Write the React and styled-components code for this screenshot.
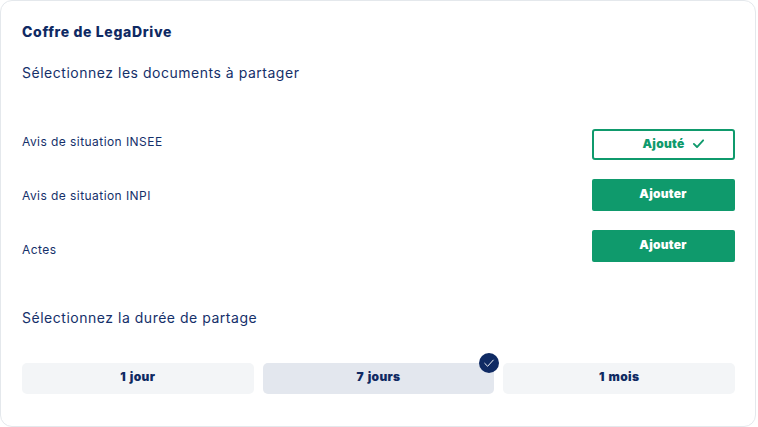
import styled, { createGlobalStyle } from "styled-components";

const GlobalStyle = createGlobalStyle`
  html, body {
    margin: 0;
    padding: 0;
    background: #fff;
    font-family: Inter, "Liberation Sans", sans-serif;
    color: #0f2a63;
  }
`;

const docs = [
  { name: "Avis de situation INSEE", added: true, shift: -2 },
  { name: "Avis de situation INPI", added: false, shift: 1 },
  { name: "Actes", added: false, shift: 4 },
];

const durations = [
  { label: "1 jour" },
  { label: "7 jours", selected: true },
  { label: "1 mois" },
];

const Check = ({ size, color, weight }) => (
  <svg width={size} height={size} viewBox="0 0 14 14" fill="none">
    <path
      d="M2 7.4 5.4 10.8 12 3.6"
      stroke={color}
      strokeWidth={weight}
      strokeLinecap="round"
      strokeLinejoin="round"
    />
  </svg>
);

export default function App() {
  return (
    <>
      <GlobalStyle />
      <Card>
        <Title>Coffre de LegaDrive</Title>
        <Subtitle>Sélectionnez les documents à partager</Subtitle>
        <DocList>
          {docs.map((doc) => (
            <DocRow key={doc.name}>
              <DocName $shift={doc.shift}>{doc.name}</DocName>
              {doc.added ? (
                <AddedBtn>
                  Ajouté
                  <Check size={13} color="#0f9a6c" weight={2} />
                </AddedBtn>
              ) : (
                <AddBtn>Ajouter</AddBtn>
              )}
            </DocRow>
          ))}
        </DocList>
        <DurationTitle>Sélectionnez la durée de partage</DurationTitle>
        <Durations>
          {durations.map((d) => (
            <DurationBtn key={d.label} $selected={d.selected}>
              {d.label}
              {d.selected && (
                <Badge>
                  <Check size={12} color="#fff" weight={1.1} />
                </Badge>
              )}
            </DurationBtn>
          ))}
        </Durations>
      </Card>
    </>
  );
}

const Card = styled.div`
  box-sizing: border-box;
  width: 756px;
  height: 427px;
  padding: 22px 20px 0 21px;
  background: #fff;
  border: 1px solid #e4e8ec;
  border-radius: 12px;
`;

const Title = styled.div`
  font-size: 14px;
  line-height: 18px;
  font-weight: 800;
  letter-spacing: 0.65px;
  color: #0f2a63;
`;

const Subtitle = styled.div`
  margin-top: 23px;
  font-size: 14px;
  line-height: 18px;
  font-weight: 400;
  letter-spacing: 0.52px;
  color: #15306a;
`;

const DocList = styled.div`
  margin-top: 46px;
  display: flex;
  flex-direction: column;
  gap: 19px;
`;

const DocRow = styled.div`
  height: 32px;
  display: flex;
  align-items: center;
  justify-content: space-between;
`;

const DocName = styled.div`
  font-size: 12px;
  line-height: 16px;
  letter-spacing: 0.44px;
  color: #15306a;
  transform: translateY(${(p) => p.$shift}px);
`;

const AddBtn = styled.button`
  box-sizing: border-box;
  width: 143px;
  height: 32px;
  padding: 0 1px 4px 0;
  border: none;
  border-radius: 2px;
  background: #0f9a6c;
  color: #fff;
  font-family: inherit;
  font-size: 12px;
  font-weight: 900;
  letter-spacing: 0.25px;
`;

const AddedBtn = styled.button`
  box-sizing: border-box;
  width: 143px;
  height: 31px;
  align-self: flex-end;
  padding: 0 0 2px 21px;
  display: flex;
  align-items: center;
  justify-content: center;
  gap: 8px;
  border: 2px solid #0f9a6c;
  border-radius: 3px;
  background: #fff;
  color: #0f9a6c;
  font-family: inherit;
  font-size: 12px;
  font-weight: 900;
  letter-spacing: 0.25px;
`;

const DurationTitle = styled.div`
  margin-top: 47px;
  font-size: 14px;
  line-height: 18px;
  letter-spacing: 0.52px;
  color: #15306a;
`;

const Durations = styled.div`
  margin-top: 36px;
  display: grid;
  grid-template-columns: repeat(3, 1fr);
  gap: 9px;
`;

const DurationBtn = styled.div`
  position: relative;
  box-sizing: border-box;
  height: 31px;
  padding-bottom: 4px;
  display: flex;
  align-items: center;
  justify-content: center;
  border-radius: 5px;
  background: ${(p) => (p.$selected ? "#e3e7ee" : "#f3f5f7")};
  color: #0f2a63;
  font-size: 12px;
  font-weight: 900;
  letter-spacing: 0.35px;
  word-spacing: 1px;
`;

const Badge = styled.div`
  position: absolute;
  top: -10px;
  right: -5px;
  width: 20px;
  height: 20px;
  display: flex;
  align-items: center;
  justify-content: center;
  border-radius: 50%;
  background: #0f2a63;
`;
